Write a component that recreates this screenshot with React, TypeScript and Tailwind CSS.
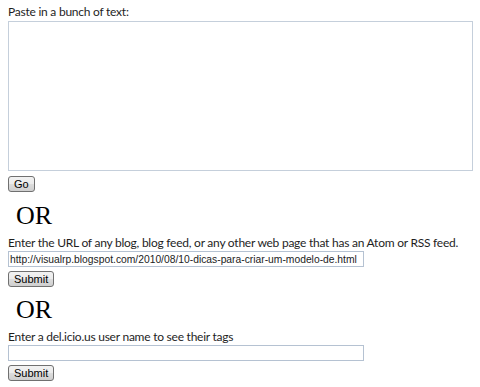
import React from "react";

const btn =
  "block h-[16px] px-[5px] rounded-[3px] border border-[#707070] bg-[linear-gradient(#f2f2f2,#ebebeb_50%,#dddddd_50%,#cfcfcf)] text-[11px] leading-[13px] text-black [font-family:'Liberation_Sans',Arial,sans-serif]";
const label = "whitespace-nowrap text-[12px] tracking-[-0.24px] leading-[15px] text-[#1e1e1e] [font-family:Lato,sans-serif]";
const input =
  "block h-[16px] w-[356px] border border-[#b5c2d2] px-[1px] text-[10.3px] leading-[14px] text-[#222] [font-family:'Liberation_Sans',Arial,sans-serif] outline-none";
const orCls = "pl-[8px] text-[26px] leading-[30px] text-black [font-family:'Liberation_Serif','Times_New_Roman',serif]";

export default function App() {
  return (
    <div className="bg-white w-[480px] h-[387px] pl-[8px] pt-[4px] overflow-hidden">
      <div className={label}>Paste in a bunch of text:</div>
      <textarea className="block mt-[2px] w-[465px] h-[150px] border border-[#c5cfdb] resize-none outline-none" />
      <button className={btn + " mt-[5px]"}>Go</button>
      <div className={orCls + " mt-[9px]"}>OR</div>
      <div className={label + " mt-[4px]"}>Enter the URL of any blog, blog feed, or any other web page that has an Atom or RSS feed.</div>
      <input className={input + " mt-[1px]"} defaultValue="http://visualrp.blogspot.com/2010/08/10-dicas-para-criar-um-modelo-de.html" />
      <button className={btn + " mt-[4px]"}>Submit</button>
      <div className={orCls + " mt-[8px]"}>OR</div>
      <div className={label + " mt-[4px]"}>Enter a del.icio.us user name to see their tags</div>
      <input className={input + " mt-[1px]"} defaultValue="" />
      <button className={btn + " mt-[4px]"}>Submit</button>
    </div>
  );
}
